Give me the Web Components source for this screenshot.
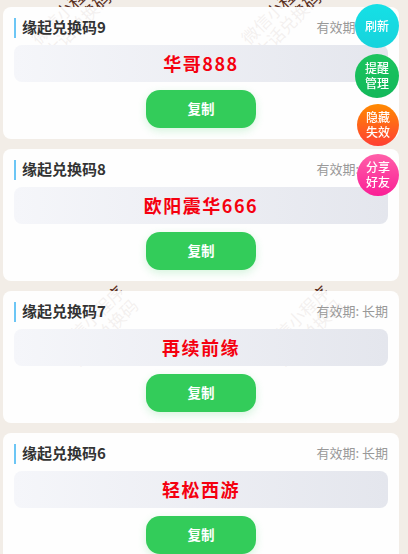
<!DOCTYPE html>
<html lang="zh">
<head>
<meta charset="utf-8">
<title>缘起兑换码</title>
<style>
    html, body {
        margin: 0;
        height: 554px;
        overflow: hidden;
        background: #f2ede7;
        font-family: "Noto Sans CJK SC", "Noto Sans", sans-serif;
    }
</style>
</head>
<body>
<water-marks></water-marks>
<card-list>
    <code-card><span slot="title">缘起兑换码9</span>华哥888</code-card>
    <code-card><span slot="title">缘起兑换码8</span>欧阳震华666</code-card>
    <code-card><span slot="title">缘起兑换码7</span>再续前缘</code-card>
    <code-card><span slot="title">缘起兑换码6</span>轻松西游</code-card>
</card-list>
<float-stack>
    <float-btn size="44" colors="#15e0e6,#17d3dc">刷新</float-btn>
    <float-btn size="44" colors="#1cc45e,#12b85a" gap="6">提醒<br>管理</float-btn>
    <float-btn size="42" colors="#ff8a00,#ff3f34" gap="6">隐藏<br>失效</float-btn>
    <float-btn size="42" colors="#ff5fa8,#fa1f96" gap="8">分享<br>好友</float-btn>
</float-stack>
<script>
    class WaterMarks extends HTMLElement {
        constructor() {
            super();
            this.attachShadow({ mode: 'open' });
        }

        connectedCallback() {
            const spots = [[70, 17], [280, 17], [97, 325], [302, 325]];
            const marks = spots.map(([x, y]) =>
                `<div class="mark" style="left:${x}px;top:${y}px">微信小程序<br>大话兑换码</div>`
            ).join('');
            this.shadowRoot.innerHTML = `
                <style>
                    :host {
                        display: block;
                        position: absolute;
                        left: 0;
                        top: 0;
                        width: 408px;
                        height: 554px;
                        overflow: hidden;
                    }
                    .mark {
                        position: absolute;
                        width: 85px;
                        margin: -19px 0 0 -42px;
                        transform: rotate(-45deg);
                        font-size: 17px;
                        line-height: 19px;
                        text-align: center;
                        color: #5a2f1c;
                        white-space: nowrap;
                    }
                </style>
                ${marks}
            `;
        }
    }

    class CardList extends HTMLElement {
        constructor() {
            super();
            this.attachShadow({ mode: 'open' });
            this.shadowRoot.innerHTML = `
                <style>
                    :host {
                        display: flex;
                        flex-direction: column;
                        gap: 10px;
                        position: relative;
                        padding: 7px 9px 0 3px;
                    }
                </style>
                <slot></slot>
            `;
        }
    }

    class CodeCard extends HTMLElement {
        constructor() {
            super();
            this.attachShadow({ mode: 'open' });
            this.shadowRoot.innerHTML = `
                <style>
                    :host {
                        display: block;
                        box-sizing: border-box;
                        height: 132px;
                        padding: 11px 11px 0;
                        border-radius: 8px;
                        background: rgba(255, 255, 255, 0.93);
                    }
                    .head {
                        display: flex;
                        align-items: center;
                        justify-content: space-between;
                        height: 20px;
                    }
                    .title {
                        border-left: 2px solid #6cc6f5;
                        padding: 0 0 2px 6px;
                        font-size: 15px;
                        line-height: 18px;
                        font-weight: 700;
                        color: #333;
                    }
                    .expire {
                        padding-bottom: 2px;
                        font-size: 13px;
                        line-height: 18px;
                        color: #999;
                    }
                    .code {
                        height: 37px;
                        margin-top: 7px;
                        border-radius: 8px;
                        background: linear-gradient(90deg, #f5f6fa, #e4e6ed);
                        text-align: center;
                        font-size: 18px;
                        line-height: 37px;
                        font-weight: 700;
                        letter-spacing: 1.5px;
                        color: #f5000f;
                    }
                    .foot {
                        display: flex;
                        justify-content: center;
                        margin-top: 8px;
                    }
                    button {
                        width: 110px;
                        height: 38px;
                        padding: 0 0 2px;
                        border: 0;
                        border-radius: 14px;
                        background: #33cc5a;
                        box-shadow: 0 3px 8px rgba(51, 204, 90, 0.2);
                        font: 700 13.5px "Noto Sans CJK SC", sans-serif;
                        color: #fff;
                    }
                </style>
                <div class="head">
                    <div class="title"><slot name="title"></slot></div>
                    <div class="expire">有效期: 长期</div>
                </div>
                <div class="code"><slot></slot></div>
                <div class="foot"><button>复制</button></div>
            `;
        }
    }

    class FloatStack extends HTMLElement {
        constructor() {
            super();
            this.attachShadow({ mode: 'open' });
            this.shadowRoot.innerHTML = `
                <style>
                    :host {
                        display: flex;
                        flex-direction: column;
                        align-items: flex-end;
                        position: fixed;
                        right: 9px;
                        top: 4px;
                    }
                </style>
                <slot></slot>
            `;
        }
    }

    class FloatBtn extends HTMLElement {
        constructor() {
            super();
            this.attachShadow({ mode: 'open' });
        }

        connectedCallback() {
            const size = this.getAttribute('size') || 44;
            const gap = this.getAttribute('gap') || 0;
            const [from, to] = (this.getAttribute('colors') || '#15e0e6,#17d3dc').split(',');
            this.shadowRoot.innerHTML = `
                <style>
                    :host {
                        display: flex;
                        align-items: center;
                        justify-content: center;
                        box-sizing: border-box;
                        width: ${size}px;
                        height: ${size}px;
                        margin-top: ${gap}px;
                        padding-bottom: 2px;
                        border-radius: 50%;
                        background: linear-gradient(180deg, ${from}, ${to});
                        text-align: center;
                        font-size: 12px;
                        font-weight: 500;
                        line-height: 15px;
                        color: #fff;
                    }
                </style>
                <slot></slot>
            `;
        }
    }

    customElements.define('water-marks', WaterMarks);
    customElements.define('card-list', CardList);
    customElements.define('code-card', CodeCard);
    customElements.define('float-stack', FloatStack);
    customElements.define('float-btn', FloatBtn);
</script>
</body>
</html>
